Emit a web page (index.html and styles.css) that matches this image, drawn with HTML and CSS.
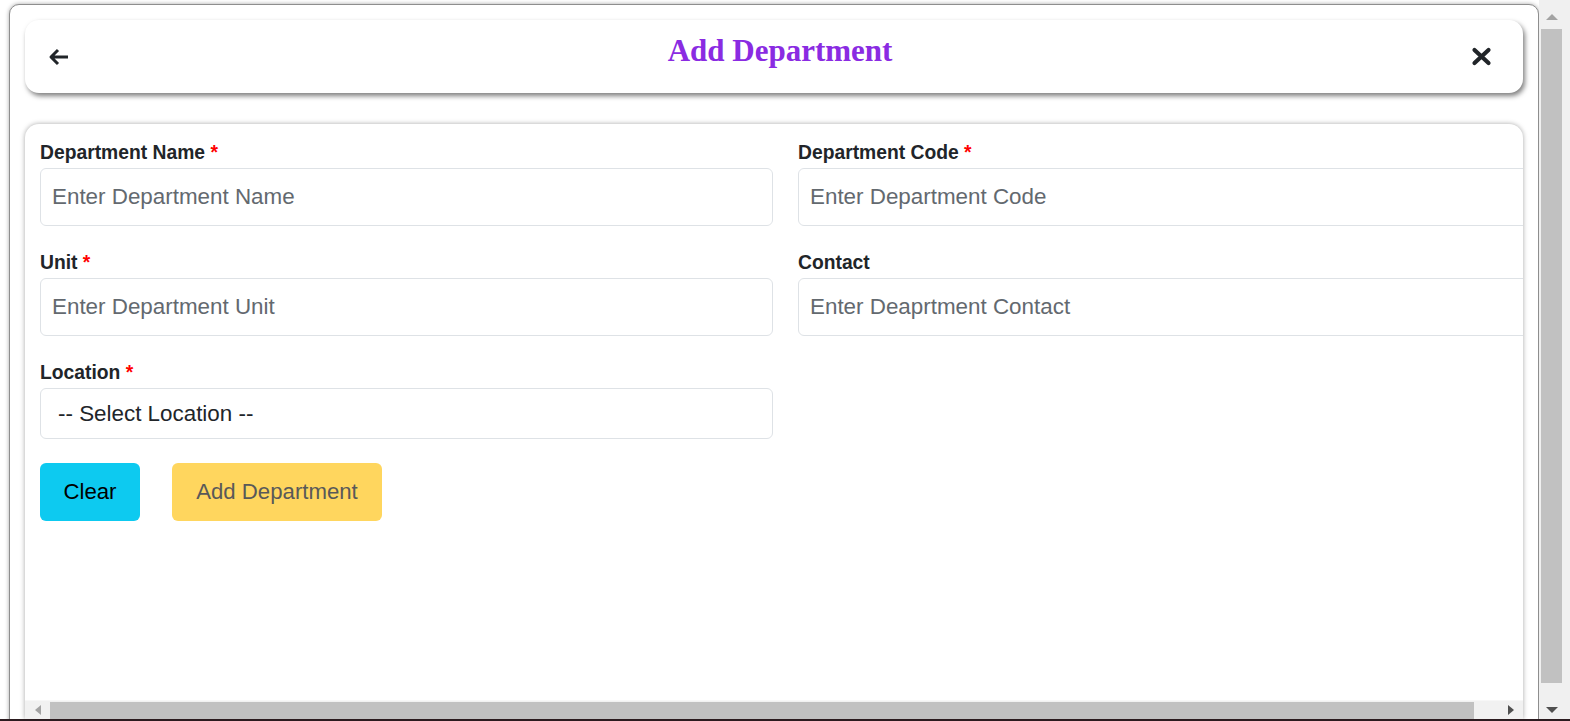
FILE: index.html
```html
<!DOCTYPE html>
<html lang="en">
<head>
<meta charset="utf-8">
<title>Add Department</title>
<link rel="stylesheet" href="styles.css">
</head>
<body>
<div class="page">
  <div class="main">
    <div class="frame">
      <header class="topbar">
        <span class="icon-back" aria-label="Back">
          <svg width="21" height="18" viewBox="0 0 21 18"><path d="M20 9H3 M10 2 L3 9 L10 16" fill="none" stroke="#212529" stroke-width="3" stroke-linejoin="round"/></svg>
        </span>
        <h1 class="title">Add Department</h1>
        <span class="icon-close" aria-label="Close">
          <svg width="21" height="19" viewBox="0 0 21 19"><path d="M3.5 3 L17.5 16 M17.5 3 L3.5 16" fill="none" stroke="#212529" stroke-width="4.2" stroke-linecap="round"/></svg>
        </span>
      </header>

      <section class="card">
        <div class="card-body">
          <div class="grid">
            <div class="field">
              <label class="label">Department Name <span class="req">*</span></label>
              <input class="control" type="text" placeholder="Enter Department Name">
            </div>
            <div class="field">
              <label class="label">Department Code <span class="req">*</span></label>
              <input class="control" type="text" placeholder="Enter Department Code">
            </div>
            <div class="field">
              <label class="label">Unit <span class="req">*</span></label>
              <input class="control" type="text" placeholder="Enter Department Unit">
            </div>
            <div class="field">
              <label class="label">Contact</label>
              <input class="control" type="text" placeholder="Enter Deaprtment Contact">
            </div>
            <div class="field">
              <label class="label">Location <span class="req">*</span></label>
              <select class="control select">
                <option>-- Select Location --</option>
              </select>
            </div>
          </div>
          <div class="actions">
            <button class="btn btn-clear" type="button">Clear</button>
            <button class="btn btn-add" type="button" disabled>Add Department</button>
          </div>
        </div>
        <div class="hscroll">
          <div class="hs-btn"><span class="tri-left"></span></div>
          <div class="hs-thumb"></div>
          <div class="hs-rest"></div>
          <div class="hs-btn"><span class="tri-right"></span></div>
        </div>
      </section>
    </div>
  </div>
  <div class="vscroll">
    <div class="vs-up"><span class="tri-up"></span></div>
    <div class="vs-thumb"></div>
    <div class="vs-rest"></div>
    <div class="vs-down"><span class="tri-down"></span></div>
  </div>
</div>
<div class="taskbar"></div>
</body>
</html>
```

FILE: styles.css
```css
* { box-sizing: border-box; }

html, body {
  margin: 0;
  padding: 0;
  width: 1570px;
  height: 721px;
  overflow: hidden;
  background: #ffffff;
  font-family: "Liberation Sans", Arial, sans-serif;
  color: #212529;
}

.page {
  display: flex;
  height: 719px;
}

.main {
  flex: 0 0 1539px;
  padding: 4px 0 0 9px;
  overflow: hidden;
}

.frame {
  height: 740px;
  border: 1px solid #8e8e8e;
  border-radius: 10px 10px 0 0;
  box-shadow: 0 0 4px rgba(0, 0, 0, 0.35);
  padding: 15px 15px 0 15px;
  background: #ffffff;
}

.topbar {
  height: 73px;
  background: #ffffff;
  border-radius: 14px;
  box-shadow: 2px 3px 5px rgba(0, 0, 0, 0.5);
  display: flex;
  align-items: center;
  padding: 0 31px 0 23px;
}

.icon-back, .icon-close {
  display: flex;
  flex: none;
}

.title {
  flex: 1;
  align-self: flex-start;
  margin: 15px 0 0 0;
  padding-left: 20px;
  text-align: center;
  font-family: "Liberation Serif", "Times New Roman", serif;
  font-weight: bold;
  font-size: 31px;
  line-height: 31px;
  color: #8a2be2;
}

.card {
  margin-top: 31px;
  height: 595px;
  background: #ffffff;
  border-radius: 14px 14px 0 0;
  box-shadow: 0 0 5px rgba(0, 0, 0, 0.35);
  display: flex;
  flex-direction: column;
  overflow: hidden;
}

.card-body {
  flex: 1;
  padding: 16px 15px;
  overflow: hidden;
}

.grid {
  display: grid;
  grid-template-columns: 733px 733px;
  column-gap: 25px;
  row-gap: 24px;
}

.label {
  display: block;
  font-weight: bold;
  font-size: 19.3px;
  line-height: 24px;
  margin-bottom: 3px;
  padding-top: 1px;
  color: #212529;
  white-space: nowrap;
}

.req { color: #ff0000; }

.control {
  display: block;
  width: 100%;
  height: 58px;
  border: 1px solid #dee2e6;
  border-radius: 6px;
  background: #ffffff;
  padding: 0 11px 0 11px;
  font-family: "Liberation Sans", Arial, sans-serif;
  font-size: 22.4px;
  color: #212529;
  outline: none;
}

.control::placeholder { color: #63696f; opacity: 1; }

.select {
  height: 51px;
  appearance: none;
  -webkit-appearance: none;
  padding: 0 11px 0 17px;
}

.actions {
  display: flex;
  gap: 32px;
  margin-top: 24px;
}

.btn {
  height: 58px;
  border: none;
  border-radius: 6px;
  font-family: "Liberation Sans", Arial, sans-serif;
  font-size: 22.2px;
  padding: 0;
}

.btn-clear {
  width: 100px;
  background: #0dcaf0;
  color: #000000;
}

.btn-add {
  width: 210px;
  background: #ffd65e;
  color: #595959;
}

.hscroll {
  flex: none;
  height: 19px;
  background: #f1f1f1;
  display: flex;
  align-items: center;
  border-top: 1px solid #f7f7f7;
}

.hs-btn {
  width: 25px;
  height: 100%;
  display: flex;
  align-items: center;
  justify-content: center;
  flex: none;
}

.hs-thumb {
  width: 1424px;
  height: 17px;
  background: #c1c1c1;
  flex: none;
}

.hs-rest { flex: 1; }

.tri-left {
  width: 0; height: 0;
  border-top: 5px solid transparent;
  border-bottom: 5px solid transparent;
  border-right: 6px solid #a3a3a3;
}

.tri-right {
  width: 0; height: 0;
  border-top: 5px solid transparent;
  border-bottom: 5px solid transparent;
  border-left: 6px solid #505050;
}

.vscroll {
  flex: 1;
  background: #f0f0f0;
  display: flex;
  flex-direction: column;
  padding-left: 2px;
}

.vs-up, .vs-down {
  width: 21px;
  display: flex;
  justify-content: center;
  align-items: center;
  flex: none;
}

.vs-up { height: 29px; padding-top: 4px; }
.vs-down { height: 19px; }

.vs-thumb {
  width: 21px;
  height: 654px;
  background: #c1c1c1;
  flex: none;
}

.vs-rest { flex: 1; }

.tri-up {
  width: 0; height: 0;
  border-left: 6px solid transparent;
  border-right: 6px solid transparent;
  border-bottom: 6px solid #a3a3a3;
}

.tri-down {
  width: 0; height: 0;
  border-left: 6px solid transparent;
  border-right: 6px solid transparent;
  border-top: 6px solid #505050;
}

.taskbar {
  height: 2px;
  background: #2b1b1f;
}
```
